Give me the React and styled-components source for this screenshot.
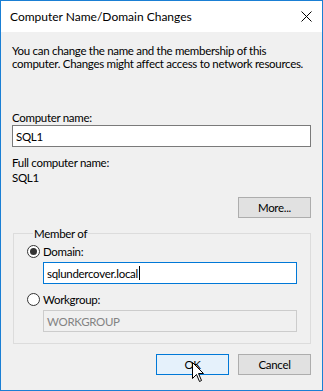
import React from "react";
import styled, { createGlobalStyle } from "styled-components";

const GlobalStyle = createGlobalStyle`
  html, body {
    margin: 0;
    padding: 0;
    background: #ffffff;
  }
  body {
    font-family: Lato, "Noto Sans", "Liberation Sans", sans-serif;
    font-size: 11.5px;
    letter-spacing: -0.3px;
    color: #000;
  }
`;

const Window = styled.div`
  position: relative;
  width: 323px;
  height: 391px;
  box-sizing: border-box;
  border: 1px solid #1a7fd4;
  display: flex;
  flex-direction: column;
  overflow: hidden;
`;

const TitleBar = styled.div`
  height: 31px;
  flex: none;
  background: #ffffff;
  display: flex;
  align-items: center;
  justify-content: space-between;
  padding: 0 10px 0 9px;
`;

const Title = styled.span`
  font-size: 12px;
  letter-spacing: 0;
  line-height: 15px;
`;

const Body = styled.div`
  flex: 1;
  background: #f0f0f0;
  padding: 12px 11px 0 11px;
  display: flex;
  flex-direction: column;
`;

const Text = styled.div`
  line-height: 13px;
  margin-top: ${(p) => p.$top || 0}px;
  white-space: nowrap;
`;

const TextBox = styled.div`
  box-sizing: border-box;
  height: 22px;
  margin-top: ${(p) => p.$top || 0}px;
  margin-left: ${(p) => p.$left || 0}px;
  padding: 0 3px;
  display: flex;
  align-items: center;
  border: 1px solid ${(p) => (p.$focus ? "#0078d7" : p.$disabled ? "#cccccc" : "#7a7a7a")};
  background: ${(p) => (p.$disabled ? "#f0f0f0" : "#ffffff")};
  color: ${(p) => (p.$disabled ? "#838383" : "#000")};
`;

const Caret = styled.span`
  display: inline-block;
  width: 1px;
  height: 14px;
  background: #000;
  margin-left: 1px;
`;

const ButtonRow = styled.div`
  display: flex;
  justify-content: flex-end;
  gap: 9px;
  margin-top: ${(p) => p.$top || 0}px;
`;

const Button = styled.div`
  box-sizing: border-box;
  width: 73px;
  height: 21px;
  display: flex;
  align-items: center;
  justify-content: center;
  border: 1px solid ${(p) => (p.$hover ? "#0078d7" : "#adadad")};
  background: ${(p) => (p.$hover ? "#e5f1fb" : "#e1e1e1")};
`;

const Group = styled.fieldset`
  margin: 9px 0 0 1px;
  padding: 4px 13px 11px 13px;
  border: 1px solid #dcdcdc;
  min-width: 0;
`;

const Legend = styled.legend`
  padding: 0 1px;
  margin-left: 6px;
  line-height: 13px;
`;

const RadioRow = styled.div`
  display: flex;
  align-items: center;
  gap: 3px;
  height: 15px;
  margin-top: ${(p) => p.$top || 0}px;
`;

const RadioCircle = styled.span`
  box-sizing: border-box;
  width: 13px;
  height: 13px;
  border-radius: 50%;
  border: 1px solid #333;
  background: #fff;
  display: flex;
  align-items: center;
  justify-content: center;
  &::after {
    content: "";
    width: 7px;
    height: 7px;
    border-radius: 50%;
    background: ${(p) => (p.$checked ? "#333" : "transparent")};
  }
`;

const Pointer = styled.svg`
  position: absolute;
  left: 191px;
  top: 361px;
`;

function CloseIcon() {
  return (
    <svg width="11" height="11" viewBox="0 0 11 11">
      <path d="M0.5 0.5 L10.5 10.5 M10.5 0.5 L0.5 10.5" stroke="#000" strokeWidth="1" fill="none" />
    </svg>
  );
}

export default function App() {
  return (
    <>
      <GlobalStyle />
      <Window>
        <TitleBar>
          <Title>Computer Name/Domain Changes</Title>
          <CloseIcon />
        </TitleBar>
        <Body>
          <Text>You can change the name and the membership of this</Text>
          <Text>computer. Changes might affect access to network resources.</Text>

          <Text $top={41}>Computer name:</Text>
          <TextBox $top={1}>SQL1</TextBox>

          <Text $top={9}>Full computer name:</Text>
          <Text $top={2}>SQL1</Text>

          <ButtonRow $top={13}>
            <Button>More...</Button>
          </ButtonRow>

          <Group>
            <Legend>Member of</Legend>
            <RadioRow>
              <RadioCircle $checked />
              Domain:
            </RadioRow>
            <TextBox $top={3} $left={16} $focus>
              sqlundercover.local
              <Caret />
            </TextBox>
            <RadioRow $top={8}>
              <RadioCircle />
              Workgroup:
            </RadioRow>
            <TextBox $top={3} $left={16} $disabled>
              WORKGROUP
            </TextBox>
          </Group>

          <ButtonRow $top={10}>
            <Button $hover>OK</Button>
            <Button>Cancel</Button>
          </ButtonRow>
        </Body>
        <Pointer width="13" height="21" viewBox="0 0 13 21">
          <path
            d="M0.5 0.5 L0.5 16.5 L4.5 12.5 L7.5 19.5 L9.5 18.5 L6.5 11.5 L11.5 11.5 Z"
            fill="#fff"
            stroke="#000"
            strokeWidth="1"
            strokeLinejoin="miter"
          />
        </Pointer>
      </Window>
    </>
  );
}
